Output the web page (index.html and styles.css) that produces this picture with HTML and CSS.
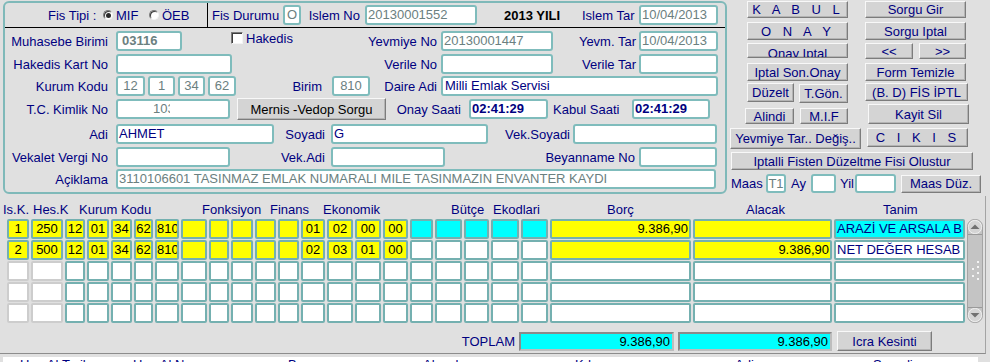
FILE: index.html
```html
<!DOCTYPE html>
<html lang="tr">
<head>
<meta charset="utf-8">
<title>Fis Girisi</title>
<link rel="stylesheet" href="styles.css">
</head>
<body>
<div class="top">
  <section class="panel">
    <div class="head">
      <div class="fistipi">
        <span class="lbl-fistipi">Fis Tipi :</span>
        <span class="radio on"></span><span class="rtxt">MIF</span>
        <span class="radio"></span><span class="rtxt">ÖEB</span>
      </div>
      <div class="headright">
        <span class="lb h-durum">Fis Durumu</span>
        <div class="fld gray ctr w18">O</div>
        <span class="lb h-islemno">Islem No</span>
        <div class="fld gray w112">20130001552</div>
        <span class="yili">2013 YILI</span>
        <span class="lb h-islemtar">Islem Tar</span>
        <div class="fld gray w79">10/04/2013</div>
      </div>
    </div>
    <div class="form">
      <div class="row">
        <span class="lb l-first">Muhasebe Birimi</span>
        <div class="fld gray bold pl5 w66">03116</div>
        <div class="chk"><span class="box"></span>Hakedis</div>
        <span class="lb l-yevno">Yevmiye No</span>
        <div class="fld gray w112">20130001447</div>
        <span class="lb l-tar">Yevm. Tar</span>
        <div class="fld gray w79">10/04/2013</div>
      </div>
      <div class="row">
        <span class="lb l-first">Hakedis Kart No</span>
        <div class="fld w116"></div>
        <span class="lb l-verno">Verile No</span>
        <div class="fld w112"></div>
        <span class="lb l-tar">Verile Tar</span>
        <div class="fld w79"></div>
      </div>
      <div class="row m2">
        <span class="lb l-first">Kurum Kodu</span>
        <div class="kodlar">
          <div class="fld gray ctr w29">12</div>
          <div class="fld gray ctr w27">1</div>
          <div class="fld gray ctr w27">34</div>
          <div class="fld gray ctr w28">62</div>
        </div>
        <span class="lb l-birim">Birim</span>
        <div class="fld gray ctr w38">810</div>
        <span class="lb l-daire">Daire Adi</span>
        <div class="fld pl2 w277">Milli Emlak Servisi</div>
      </div>
      <div class="row">
        <span class="lb l-first">T.C. Kimlik No</span>
        <div class="fld gray w114"><span class="tcno">103</span></div>
        <button class="btn b-mernis">Mernis -Vedop Sorgu</button>
        <span class="lb l-onay">Onay Saati</span>
        <div class="fld bold w79">02:41:29</div>
        <span class="lb l-kabul">Kabul Saati</span>
        <div class="fld bold w78">02:41:29</div>
      </div>
      <div class="row m5">
        <span class="lb l-first">Adi</span>
        <div class="fld w158">AHMET</div>
        <span class="lb l-soy">Soyadi</span>
        <div class="fld w157">G</div>
        <span class="lb l-veksoy">Vek.Soyadi</span>
        <div class="fld w144"></div>
      </div>
      <div class="row">
        <span class="lb l-first">Vekalet Vergi No</span>
        <div class="fld w114"></div>
        <span class="lb l-vekadi">Vek.Adi</span>
        <div class="fld w114"></div>
        <span class="lb l-beyan">Beyanname No</span>
        <div class="fld w78"></div>
      </div>
      <div class="row m2">
        <span class="lb l-first">Açiklama</span>
        <div class="fld gray w600">3110106601 TASINMAZ EMLAK NUMARALI MILE TASINMAZIN ENVANTER KAYDI</div>
      </div>
    </div>
  </section>

  <aside class="actions">
    <div class="arow ar1">
      <button class="btn bl h17 spaced">K A B U L</button>
      <button class="btn br h17">Sorgu Gir</button>
    </div>
    <div class="arow ar1">
      <button class="btn bl h18 spaced">O N A Y</button>
      <button class="btn br h18">Sorgu Iptal</button>
    </div>
    <div class="arow ar3">
      <button class="btn bl h15 cut">Onay Iptal</button>
      <button class="btn b-prev">&lt;&lt;</button>
      <button class="btn b-next">&gt;&gt;</button>
    </div>
    <div class="arow ar3">
      <button class="btn bl h18">Iptal Son.Onay</button>
      <button class="btn br h18">Form Temizle</button>
    </div>
    <div class="arow ar1">
      <button class="btn b-duzelt">Düzelt</button>
      <button class="btn b-tgon">T.Gön.</button>
      <button class="btn b-bd">(B. D) FİS İPTL</button>
    </div>
    <div class="arow ar6">
      <button class="btn b-alindi">Alindi</button>
      <button class="btn b-mif">M.I.F</button>
      <button class="btn b-kayit">Kayit Sil</button>
    </div>
    <div class="arow ar6">
      <button class="btn b-yevmiye">Yevmiye Tar.. Değiş..</button>
      <button class="btn b-cikis spaced">C I K I S</button>
    </div>
    <div class="arow ar8">
      <button class="btn b-iptalli">Iptalli Fisten Düzeltme Fisi Olustur</button>
    </div>
    <div class="arow maas">
      <span class="maas-l">Maas</span>
      <div class="fld gray ctr w20 h19">T1</div>
      <span class="ay-l">Ay</span>
      <div class="fld w25 h19"></div>
      <span class="yil-l">Yil</span>
      <div class="fld w41 h19"></div>
      <button class="btn b-maas">Maas Düz.</button>
    </div>
  </aside>
</div>

<section class="grid">
  <div class="ghead">
    <span class="h-isk">Is.K.</span>
    <span class="h-hesk">Hes.K</span>
    <span class="h-kurum">Kurum Kodu</span>
    <span class="h-fonk">Fonksiyon</span>
    <span class="h-fin">Finans</span>
    <span class="h-eko">Ekonomik</span>
    <span class="h-but">Bütçe</span>
    <span class="h-ekod">Ekodlari</span>
    <span class="h-borc">Borç</span>
    <span class="h-alacak">Alacak</span>
    <span>Tanim</span>
  </div>
  <div class="gbody">
    <div class="cells">
      <div class="cell y">1</div><div class="cell y">250</div><div class="cell y">12</div><div class="cell y">01</div><div class="cell y">34</div><div class="cell y">62</div><div class="cell y">810</div>
      <div class="cell y"></div><div class="cell y"></div><div class="cell y"></div><div class="cell y"></div><div class="cell y"></div>
      <div class="cell y">01</div><div class="cell y">02</div><div class="cell y">00</div><div class="cell y">00</div>
      <div class="cell c"></div><div class="cell c"></div><div class="cell c"></div><div class="cell c"></div><div class="cell c"></div>
      <div class="cell y num">9.386,90</div><div class="cell y num"></div><div class="cell c tn">ARAZİ VE ARSALA B</div>

      <div class="cell y">2</div><div class="cell y">500</div><div class="cell y">12</div><div class="cell y">01</div><div class="cell y">34</div><div class="cell y">62</div><div class="cell y">810</div>
      <div class="cell y"></div><div class="cell y"></div><div class="cell y"></div><div class="cell y"></div><div class="cell y"></div>
      <div class="cell y">02</div><div class="cell y">03</div><div class="cell y">01</div><div class="cell y">00</div>
      <div class="cell"></div><div class="cell"></div><div class="cell"></div><div class="cell"></div><div class="cell"></div>
      <div class="cell y num"></div><div class="cell y num">9.386,90</div><div class="cell tn">NET DEĞER HESAB</div>

      <div class="cell g"></div><div class="cell g"></div><div class="cell"></div><div class="cell"></div><div class="cell"></div><div class="cell"></div><div class="cell"></div><div class="cell"></div><div class="cell"></div><div class="cell"></div><div class="cell"></div><div class="cell"></div><div class="cell"></div><div class="cell"></div><div class="cell"></div><div class="cell"></div><div class="cell"></div><div class="cell"></div><div class="cell"></div><div class="cell"></div><div class="cell"></div><div class="cell"></div><div class="cell"></div><div class="cell"></div>

      <div class="cell g"></div><div class="cell g"></div><div class="cell"></div><div class="cell"></div><div class="cell"></div><div class="cell"></div><div class="cell"></div><div class="cell"></div><div class="cell"></div><div class="cell"></div><div class="cell"></div><div class="cell"></div><div class="cell"></div><div class="cell"></div><div class="cell"></div><div class="cell"></div><div class="cell"></div><div class="cell"></div><div class="cell"></div><div class="cell"></div><div class="cell"></div><div class="cell"></div><div class="cell"></div><div class="cell"></div>

      <div class="cell g"></div><div class="cell g"></div><div class="cell"></div><div class="cell"></div><div class="cell"></div><div class="cell"></div><div class="cell"></div><div class="cell"></div><div class="cell"></div><div class="cell"></div><div class="cell"></div><div class="cell"></div><div class="cell"></div><div class="cell"></div><div class="cell"></div><div class="cell"></div><div class="cell"></div><div class="cell"></div><div class="cell"></div><div class="cell"></div><div class="cell"></div><div class="cell"></div><div class="cell"></div><div class="cell"></div>
    </div>
    <svg class="sb" width="16" height="104" viewBox="0 0 16 104">
      <rect x="0.5" y="0.5" width="15" height="103" rx="7" fill="#c4c4c4" stroke="#a4a4a4"/>
      <rect x="1.5" y="1.5" width="13" height="13" rx="6" fill="#d4d4d4" stroke="#f2f2f2"/>
      <path d="M3.5 10 L8 5.5 L12.5 10 Z" fill="#707070"/>
      <line x1="1" y1="15.5" x2="15" y2="15.5" stroke="#9a9a9a"/>
      <line x1="1" y1="88.5" x2="15" y2="88.5" stroke="#9a9a9a"/>
      <rect x="1.5" y="89.5" width="13" height="13" rx="6" fill="#d4d4d4" stroke="#f2f2f2"/>
      <path d="M3.5 94 L8 98.5 L12.5 94 Z" fill="#707070"/>
      <g fill="#f4f4f4">
        <rect x="10" y="42" width="2" height="2"/>
        <rect x="10" y="47" width="2" height="2"/>
        <rect x="5" y="49" width="2" height="2"/>
        <rect x="10" y="53" width="2" height="2"/>
        <rect x="5" y="56" width="2" height="2"/>
        <rect x="10" y="59" width="2" height="2"/>
      </g>
    </svg>
  </div>
  <div class="toplam">
    <span class="t-lbl">TOPLAM</span>
    <div class="tot">9.386,90</div>
    <div class="tot tot2">9.386,90</div>
    <button class="btn b-icra">Icra Kesinti</button>
  </div>
</section>

<div class="strip">
  <span class="s1">Hes.Al.Tarih</span>
  <span class="s2">Hes.Al.No</span>
  <span class="s3">Borç</span>
  <span class="s4">Alacak</span>
  <span class="s5">Kdv</span>
  <span class="s6">Adi</span>
  <span>Soyadi</span>
</div>
</body>
</html>
```
FILE: styles.css
```css
* { box-sizing: border-box; }
html, body { margin: 0; padding: 0; }
body {
  width: 990px; height: 362px; overflow: hidden;
  background: #e0e0e0;
  font-family: "Liberation Sans", Arial, sans-serif;
  font-size: 13px; line-height: 15px; color: #000080;
}
button { font: inherit; margin: 0; padding: 0; }

/* ---------- top panel ---------- */
.top { display: flex; height: 196px; }
.panel {
  flex: none; margin: 1px 0 0 3px; width: 724px; height: 193px;
  border: 2px solid #7fb9b9; border-radius: 6px;
}
.head { display: flex; height: 25px; border-bottom: 1px solid #000; }
.fistipi {
  flex: none; width: 203px; border-right: 1px solid #000;
  display: flex; align-items: center; padding-left: 43px;
}
.lbl-fistipi { width: 55px; }
.radio {
  position: relative; flex: none; width: 10px; height: 10px; border-radius: 50%;
  background: #fff; border: 1px solid; border-color: #7a7a7a #f4f4f4 #f4f4f4 #7a7a7a;
  box-shadow: inset 1px 1px 0 #3c3c3c;
}
.radio.on::after {
  content: ""; position: absolute; left: 2px; top: 2px; width: 5px; height: 5px;
  border-radius: 50%; background: #2c2c2c;
}
.rtxt { margin-left: 3px; width: 33px; }
.headright { display: flex; align-items: center; }
.lb { flex: none; text-align: right; white-space: nowrap; }
.h-durum { width: 75px; padding-left: 4px; text-align: left; }
.h-islemno { width: 64px; padding-right: 5px; }
.yili { flex: none; width: 105px; padding-left: 27px; font-weight: bold; color: #000; }
.h-islemtar { width: 57px; text-align: left; }

.fld {
  flex: none; height: 20px; background: #fff;
  border: 2px solid #7fbcbc; border-radius: 3px;
  padding: 0 1px; line-height: 16px; white-space: nowrap; overflow: hidden;
  color: #000080;
}
.fld.gray { color: #6b8080; }
.fld.bold { font-weight: bold; }
.fld.ctr { text-align: center; padding: 0; }
.pl5 { padding-left: 4px; }
.pl2 { padding-left: 2px; }
.h19 { height: 19px; line-height: 15px; }
.w18 { width: 18px; } .w20 { width: 20px; } .w25 { width: 25px; } .w27 { width: 27px; }
.w28 { width: 28px; } .w29 { width: 29px; } .w38 { width: 38px; } .w41 { width: 41px; }
.w66 { width: 66px; } .w78 { width: 78px; } .w79 { width: 79px; } .w112 { width: 112px; }
.w114 { width: 114px; } .w116 { width: 116px; } .w144 { width: 144px; } .w157 { width: 157px; }
.w158 { width: 158px; } .w277 { width: 277px; } .w600 { width: 600px; }
.tcno { display: inline-block; margin-left: 34px; width: 17px; overflow: hidden; vertical-align: top; }

.form { display: flex; flex-direction: column; }
.row { display: flex; align-items: center; height: 20px; margin-top: 3px; }
.row.m2 { margin-top: 2px; }
.row.m5 { margin-top: 5px; }
.l-first { width: 111px; padding-right: 8px; }
.l-yevno { width: 141px; padding-right: 4px; }
.l-tar { width: 86px; padding-right: 3px; }
.l-verno { width: 209px; padding-right: 4px; }
.l-birim { width: 96px; padding-right: 10px; }
.l-daire { width: 71px; padding-right: 4px; }
.l-onay { width: 83px; padding-right: 8px; }
.l-kabul { width: 84px; text-align: left; padding-left: 5px; }
.l-soy { width: 57px; padding-right: 6px; }
.l-veksoy { width: 85px; padding-right: 3px; }
.l-vekadi { width: 101px; padding-right: 6px; }
.l-beyan { width: 194px; padding-right: 4px; }
.kodlar { display: flex; gap: 3px; }
.chk {
  flex: none; align-self: flex-start; margin: 1px 0 0 49px; width: 69px; height: 12px;
  display: flex; align-items: center;
}
.box {
  flex: none; width: 12px; height: 12px; margin-right: 3px; background: #fff;
  border: 1px solid; border-color: #7a7a7a #f4f4f4 #f4f4f4 #7a7a7a;
  box-shadow: inset 1px 1px 0 #3c3c3c;
}

/* ---------- buttons ---------- */
.btn {
  flex: none; display: flex; align-items: center; justify-content: center;
  background: #d4d4d4; color: #000080; white-space: nowrap; overflow: hidden;
  border: 1px solid; border-color: #f8f8f8 #7c7c7c #7c7c7c #f8f8f8;
  box-shadow: inset -1px -1px 0 #b4b4b4;
  line-height: 15px;
}
.b-mernis { margin-left: 7px; width: 149px; height: 22px; color: #000; }

.actions { flex: none; width: 263px; padding-top: 1px; }
.arow { display: flex; align-items: flex-start; }
.ar1 { height: 21px; }
.ar3 { height: 20px; }
.ar6 { height: 24px; }
.ar8 { height: 23px; }
.bl { margin-left: 20px; width: 101px; }
.br { margin-left: 17px; width: 101px; }
.h15 { height: 15px; } .h17 { height: 17px; } .h18 { height: 18px; }
.spaced { letter-spacing: 3px; word-spacing: 2px; }
.cut { align-items: flex-start; padding-top: 2px; }
.b-prev { margin-left: 17px; width: 48px; height: 16px; }
.b-next { margin-left: 6px; width: 47px; height: 16px; }
.b-duzelt { margin-left: 20px; width: 47px; height: 19px; }
.b-tgon { margin: 1px 0 0 5px; width: 49px; height: 19px; }
.b-bd { margin-left: 17px; width: 103px; height: 18px; }
.b-alindi { margin: 4px 0 0 18px; width: 49px; height: 16px; }
.b-mif { margin: 4px 0 0 6px; width: 48px; height: 16px; }
.b-kayit { margin-left: 20px; width: 101px; height: 20px; }
.b-yevmiye { margin-left: 3px; width: 131px; height: 21px; }
.b-cikis { margin-left: 6px; width: 101px; height: 19px; }
.b-iptalli { margin-left: 4px; width: 242px; height: 18px; }
.maas { align-items: center; height: 19px; margin-top: -1px; }
.maas-l { flex: none; margin-left: 4px; width: 35px; }
.ay-l { flex: none; width: 25px; padding-left: 5px; }
.yil-l { flex: none; width: 19px; padding-left: 4px; }
.b-maas { margin-left: 5px; width: 80px; height: 18px; }

/* ---------- grid ---------- */
.grid {
  width: 986px; height: 158px; padding-top: 6px;
  border-right: 1px solid #a4a4a4; border-bottom: 1px solid #8c8c8c;
}
.ghead { display: flex; height: 15px; padding-left: 3px; white-space: nowrap; }
.ghead span { flex: none; }
.h-isk { width: 30px; } .h-hesk { width: 46px; } .h-kurum { width: 123px; }
.h-fonk { width: 68px; } .h-fin { width: 53px; } .h-eko { width: 128px; }
.h-but { width: 42px; } .h-ekod { width: 114px; } .h-borc { width: 139px; }
.h-alacak { width: 137px; }
.gbody { display: flex; margin: 2px 0 0 7px; }
.cells {
  display: grid;
  grid-template-columns: 24px 34px 22px 24px 23px 21px 26px 28px 22px 24px 23px 23px 26px 28px 28px 27px 25px 29px 27px 30px 29px 143px 141px 133px;
  grid-auto-rows: 20px; row-gap: 1px;
}
.cell {
  margin-right: 2px; background: #fff; color: #000;
  border: 2px solid #74b0b0; border-radius: 2px;
  text-align: center; line-height: 16px; white-space: nowrap; overflow: hidden;
}
.cell.g { border-color: #cdcdcd; }
.cell.y { background: #ffff00; }
.cell.c { background: #00ffff; }
.cell.num { text-align: right; padding-right: 1px; }
.cell.tn { text-align: left; padding-left: 1px; color: #000080; }
.sb { flex: none; display: block; }

.toplam { display: flex; align-items: center; height: 20px; margin-top: 8px; }
.t-lbl { flex: none; width: 516px; text-align: right; padding-right: 1px; }
.tot {
  flex: none; margin-left: 3px; width: 155px; height: 19px;
  background: #00ffff; color: #000; text-align: right; padding-right: 2px; line-height: 15px;
  border: 2px solid; border-color: #8a8a8a #bdbdbd #bdbdbd #8a8a8a;
}
.tot2 { margin-left: 4px; width: 154px; }
.b-icra { margin-left: 5px; width: 95px; height: 20px; }

/* ---------- bottom strip ---------- */
.strip {
  display: flex; margin: 3px 0 0 3px; width: 975px; height: 20px;
  background: #fff; padding-left: 17px; white-space: nowrap;
}
.strip span { flex: none; }
.s1 { width: 113px; } .s2 { width: 155px; } .s3 { width: 135px; }
.s4 { width: 152px; } .s5 { width: 160px; } .s6 { width: 138px; }
```
